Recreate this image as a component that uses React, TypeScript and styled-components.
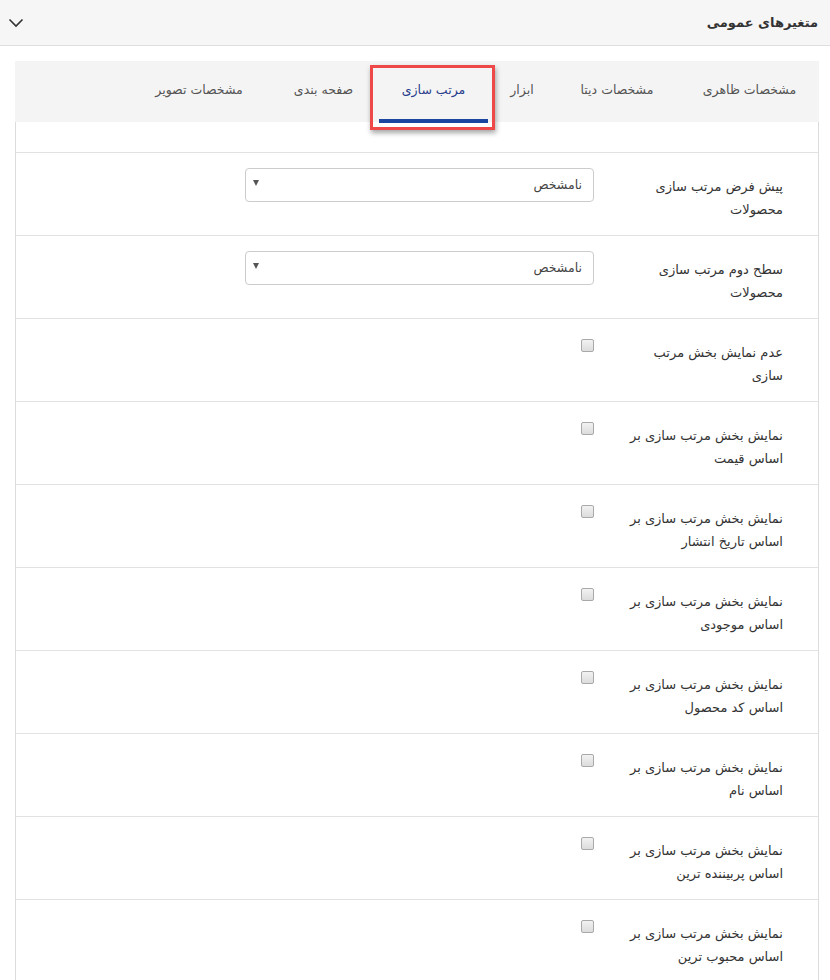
import React from 'react'
import styled, { createGlobalStyle, css } from 'styled-components'

const GlobalStyle = createGlobalStyle`
  html, body {
    margin: 0;
    padding: 0;
    background: #ffffff;
  }
  body {
    font-family: "DejaVu Sans", "Noto Sans", sans-serif;
    color: #333;
  }
  * {
    box-sizing: border-box;
  }
`

interface ITab {
  title: string
  width: number
}

const tabs: ITab[] = [
  { title: 'مشخصات ظاهری', width: 139 },
  { title: 'مشخصات دیتا', width: 122 },
  { title: 'ابزار', width: 64 },
  { title: 'مرتب سازی', width: 109 },
  { title: 'صفحه بندی', width: 107 },
  { title: 'مشخصات تصویر', width: 138 },
]

type Field =
  | { kind: 'select'; lines: string[] }
  | { kind: 'check'; lines: string[] }

const fields: Field[] = [
  { kind: 'select', lines: ['پیش فرض مرتب سازی', 'محصولات'] },
  { kind: 'select', lines: ['سطح دوم مرتب سازی', 'محصولات'] },
  { kind: 'check', lines: ['عدم نمایش بخش مرتب', 'سازی'] },
  { kind: 'check', lines: ['نمایش بخش مرتب سازی بر', 'اساس قیمت'] },
  { kind: 'check', lines: ['نمایش بخش مرتب سازی بر', 'اساس تاریخ انتشار'] },
  { kind: 'check', lines: ['نمایش بخش مرتب سازی بر', 'اساس موجودی'] },
  { kind: 'check', lines: ['نمایش بخش مرتب سازی بر', 'اساس کد محصول'] },
  { kind: 'check', lines: ['نمایش بخش مرتب سازی بر', 'اساس نام'] },
  { kind: 'check', lines: ['نمایش بخش مرتب سازی بر', 'اساس پربیننده ترین'] },
  { kind: 'check', lines: ['نمایش بخش مرتب سازی بر', 'اساس محبوب ترین'] },
]

const Page = styled.div`
  direction: rtl;
  width: 830px;
  height: 980px;
  overflow: hidden;
`

const Header = styled.div`
  height: 46px;
  background: #f6f6f6;
  border-bottom: 1px solid #dedede;
  display: flex;
  align-items: center;
  justify-content: space-between;
  padding: 0 12px 0 8px;
`

const HeaderTitle = styled.div`
  font-size: 13px;
  font-weight: bold;
  color: #333;
`

const Panel = styled.div`
  margin: 15px 11px 0 15px;
`

const TabBar = styled.div`
  height: 61px;
  background: #f4f4f4;
  display: flex;
  align-items: stretch;
`

const Tab = styled.div<{ $width: number; $active?: boolean }>`
  position: relative;
  width: ${({ $width }) => $width}px;
  margin-left: 2px;
  display: flex;
  align-items: center;
  justify-content: center;
  padding-bottom: 4px;
  font-size: 12.5px;
  white-space: nowrap;
  color: #555;

  ${({ $active }) =>
    $active &&
    css`
      color: #2a3c8c;

      &::before {
        content: '';
        position: absolute;
        left: 0;
        right: 0;
        bottom: -1px;
        height: 4px;
        background: #1a46a0;
      }

      &::after {
        content: '';
        position: absolute;
        left: -9px;
        right: -7px;
        top: 4px;
        bottom: -8px;
        border: 3px solid #ef4848;
        box-shadow: 1px 3px 5px rgba(0, 0, 0, 0.35);
      }
    `}
`

const Body = styled.div`
  border-left: 1px solid #dcdcdc;
  border-right: 1px solid #dcdcdc;
  padding-top: 30px;
`

const Row = styled.div`
  height: 83px;
  border-top: 1px solid #e2e2e2;
  display: grid;
  grid-template-columns: 165px 349px;
  column-gap: 24px;
  padding: 0 35px 0 0;
  align-items: start;
`

const Label = styled.div`
  padding-top: 22px;
  font-size: 13px;
  line-height: 23px;
  color: #333;

  span {
    display: block;
    white-space: nowrap;
  }
`

const Control = styled.div`
  padding-top: 15px;
`

const SelectBox = styled.div`
  height: 34px;
  border: 1px solid #cccccc;
  border-radius: 4px;
  background: #fff;
  display: flex;
  align-items: center;
  justify-content: space-between;
  padding: 0 11px 2px 7px;
  font-size: 12.5px;
  color: #444;
`

const Caret = styled.span`
  width: 0;
  height: 0;
  border-left: 3px solid transparent;
  border-right: 3px solid transparent;
  border-top: 6px solid #555;
  margin-bottom: 2px;
`

const CheckBox = styled.span`
  display: block;
  margin-top: 5px;
  width: 13px;
  height: 13px;
  border: 1px solid #a9a9a9;
  border-radius: 2px;
  background: linear-gradient(#f2f2f2, #dcdcdc);
`

const Chevron = () => (
  <svg width="16" height="10" viewBox="0 0 16 10">
    <path d="M1.5 1.5 L8 8 L14.5 1.5" fill="none" stroke="#333" strokeWidth="1.6" />
  </svg>
)

export default function App() {
  return (
    <Page>
      <GlobalStyle />
      <Header>
        <HeaderTitle>متغیرهای عمومی</HeaderTitle>
        <Chevron />
      </Header>
      <Panel>
        <TabBar>
          {tabs.map((t) => (
            <Tab key={t.title} $width={t.width} $active={t.title === 'مرتب سازی'}>
              {t.title}
            </Tab>
          ))}
        </TabBar>
        <Body>
          {fields.map((f, i) => (
            <Row key={i}>
              <Label>
                {f.lines.map((l) => (
                  <span key={l}>{l}</span>
                ))}
              </Label>
              <Control>
                {f.kind === 'select' ? (
                  <SelectBox>
                    <span>نامشخص</span>
                    <Caret />
                  </SelectBox>
                ) : (
                  <CheckBox />
                )}
              </Control>
            </Row>
          ))}
        </Body>
      </Panel>
    </Page>
  )
}
